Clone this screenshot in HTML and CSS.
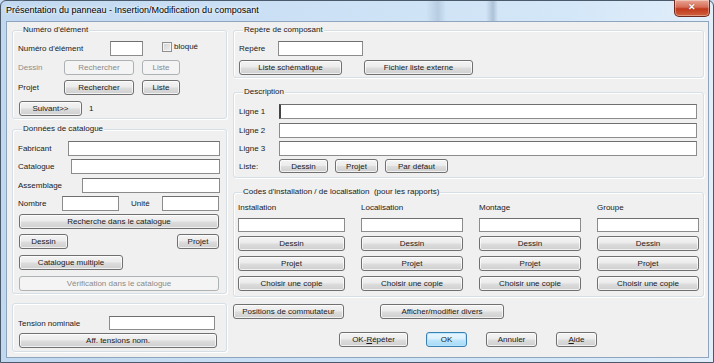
FILE: index.html
```html
<!DOCTYPE html>
<html lang="fr">
<head>
  <meta charset="UTF-8" />
  <title>Présentation du panneau</title>
  <link rel="stylesheet" href="styles.css">
</head>
<body>
  <div class="window">
    <div class="titlebar">
      <span class="title">Présentation du panneau - Insertion/Modification du composant</span>
      <div class="close">✕</div>
    </div>

    <div class="client">
      <div class="col-left">
        <div class="group g-num">
          <div class="group-title">Numéro d'élément</div>
          <div class="row">
            <span class="lbl w92">Numéro d'élément</span>
            <input class="field w33" type="text">
            <span class="check">
              <span class="check-box"></span>
              <span>bloqué</span>
            </span>
          </div>
          <div class="row mt4">
            <span class="lbl w46 grey">Dessin</span>
            <button class="btn w70" disabled>Rechercher</button>
            <button class="btn w38 ml8" disabled>Liste</button>
          </div>
          <div class="row mt5">
            <span class="lbl w46">Projet</span>
            <button class="btn w70">Rechercher</button>
            <button class="btn w38 ml8">Liste</button>
          </div>
          <div class="row mt6">
            <button class="btn w63 ml1">Suivant&gt;&gt;</button>
            <span class="ml7">1</span>
          </div>
        </div>

        <div class="group g-cat">
          <div class="group-title">Données de catalogue</div>
          <div class="row">
            <span class="lbl w50">Fabricant</span>
            <input class="field w152" type="text">
          </div>
          <div class="row mt3">
            <span class="lbl w53">Catalogue</span>
            <input class="field w149" type="text">
          </div>
          <div class="row mt4">
            <span class="lbl w64">Assemblage</span>
            <input class="field w138" type="text">
          </div>
          <div class="row mt3">
            <span class="lbl w44">Nombre</span>
            <input class="field w57" type="text">
            <span class="lbl w31 ml12">Unité</span>
            <input class="field w57" type="text">
          </div>
          <div class="row mt3">
            <button class="btn w200 ml1">Recherche dans le catalogue</button>
          </div>
          <div class="row mt5">
            <button class="btn w49 ml1">Dessin</button>
            <button class="btn w42 ml109">Projet</button>
          </div>
          <div class="row mt6">
            <button class="btn w104 ml1">Catalogue multiple</button>
          </div>
          <div class="row mt6">
            <button class="btn w200 ml1" disabled>Vérification dans le catalogue</button>
          </div>
        </div>

        <div class="group g-tension">
          <div class="row">
            <span class="lbl w91">Tension nominale</span>
            <input class="field w106 h14" type="text">
          </div>
          <div class="row mt3">
            <button class="btn w198 ml1">Aff. tensions nom.</button>
          </div>
        </div>
      </div>

      <div class="col-right">
        <div class="group g-repere">
          <div class="group-title">Repère de composant</div>
          <div class="row">
            <span class="lbl w39">Repère</span>
            <input class="field w85" type="text">
          </div>
          <div class="row mt4">
            <button class="btn w103">Liste schématique</button>
            <button class="btn w109 ml22">Fichier liste externe</button>
          </div>
        </div>

        <div class="group g-desc">
          <div class="group-title">Description</div>
          <div class="row">
            <span class="lbl w40">Ligne 1</span>
            <input class="field w418 focus" type="text">
          </div>
          <div class="row mt4">
            <span class="lbl w40">Ligne 2</span>
            <input class="field w418" type="text">
          </div>
          <div class="row mt3">
            <span class="lbl w40">Ligne 3</span>
            <input class="field w418" type="text">
          </div>
          <div class="row row-short mt3">
            <span class="lbl w40">Liste:</span>
            <button class="btn w49">Dessin</button>
            <button class="btn w43 ml7">Projet</button>
            <button class="btn w63 ml7">Par défaut</button>
          </div>
        </div>

        <div class="group g-codes">
          <div class="group-title">Codes d'installation / de localisation &nbsp;(pour les rapports)</div>
          <div class="codes">
            <div class="code-col">
              <span class="code-lbl">Installation</span>
              <input class="field h14" type="text">
              <button class="btn mt4">Dessin</button>
              <button class="btn mt5">Projet</button>
              <button class="btn mt5">Choisir une copie</button>
            </div>
            <div class="code-col">
              <span class="code-lbl">Localisation</span>
              <input class="field h14" type="text">
              <button class="btn mt4">Dessin</button>
              <button class="btn mt5">Projet</button>
              <button class="btn mt5">Choisir une copie</button>
            </div>
            <div class="code-col">
              <span class="code-lbl">Montage</span>
              <input class="field h14" type="text">
              <button class="btn mt4">Dessin</button>
              <button class="btn mt5">Projet</button>
              <button class="btn mt5">Choisir une copie</button>
            </div>
            <div class="code-col">
              <span class="code-lbl">Groupe</span>
              <input class="field h14" type="text">
              <button class="btn mt4">Dessin</button>
              <button class="btn mt5">Projet</button>
              <button class="btn mt5">Choisir une copie</button>
            </div>
          </div>
        </div>

        <div class="row actions-top">
          <button class="btn w111">Positions de commutateur</button>
          <button class="btn w124 ml36">Afficher/modifier divers</button>
        </div>
        <div class="row actions">
          <button class="btn w69 ml106">OK-<u>R</u>épéter</button>
          <button class="btn btn-default w41 ml18">OK</button>
          <button class="btn w51 ml19">Annuler</button>
          <button class="btn w41 ml19"><u>A</u>ide</button>
        </div>
      </div>
    </div>
  </div>
</body>
</html>
```

FILE: styles.css
```css
* {
  box-sizing: border-box;
}
body {
  margin: 0;
  font-family: 'Liberation Sans', Arial, sans-serif;
  font-size: 8px;
  color: #1a1a1a;
  background: #c8ddf3;
}
.window {
  width: 714px;
  height: 363px;
  border: 1px solid #4b5a6a;
  border-radius: 6px 6px 0 0;
  background: linear-gradient(to right, #c0d8f0, #cbe0f5 40%, #d4e7f8 80%, #e2eefa);
  position: relative;
  padding: 0 4px 0 5px;
}
.titlebar {
  height: 20px;
  line-height: 19px;
  font-size: 9px;
  color: #000;
  background: linear-gradient(to right, transparent 420px, rgba(90,110,140,0.2) 432px, transparent 440px, transparent 480px, rgba(90,110,140,0.3) 487px, transparent 492px);
}
.title {
  text-shadow: 0 0 6px #fff, 0 0 3px #fff;
}
.close {
  position: absolute;
  top: -1px;
  right: 3px;
  width: 36px;
  height: 17px;
  border: 1px solid #6e2a1e;
  border-top: none;
  border-radius: 0 0 5px 5px;
  background: linear-gradient(#e9a596, #d56c55 45%, #c0391d 55%, #d0603c);
  color: #fff;
  font-size: 9px;
  font-weight: bold;
  text-align: center;
  line-height: 15px;
  text-shadow: 0 0 1px #6e2a1e;
  box-shadow: inset 0 0 0 1px rgba(255,255,255,0.35);
}
.client {
  width: 703px;
  height: 337px;
  background: #f0f0f0;
  border: 1px solid #8fa5bd;
  display: flex;
  padding: 8px 4px 0 5px;
}
.col-left {
  width: 215px;
}
.col-right {
  width: 471px;
  margin-left: 6px;
}

/* group box: title sits on the top border */
.group {
  --pt: 10px;
  border: 1px solid #d5dfe5;
  border-radius: 3px;
  padding-left: 5px;
  box-shadow: inset 1px 1px 0 #fff, 1px 1px 0 #fff;
}
.group-title {
  width: fit-content;
  height: 10px;
  line-height: 10px;
  margin: -6px 0 calc(var(--pt) - 4px) 4px;
  padding: 0 1px;
  background: #f0f0f0;
}
.g-num { padding-bottom: 2px; }
.g-cat { --pt: 11px; margin-top: 10px; padding-bottom: 2px; }
.g-tension { margin-top: 9px; padding-top: 12px; padding-bottom: 3px; }
.g-repere { padding-bottom: 2px; }
.g-desc { --pt: 11px; margin-top: 14px; padding-bottom: 4px; }
.g-codes { --pt: 4px; margin-top: 14px; padding-left: 4px; padding-bottom: 5px; }

.row {
  display: flex;
  align-items: center;
}
.lbl {
  flex: none;
  white-space: nowrap;
}
.grey {
  color: #8d8d8d;
}
.field {
  display: block;
  height: 15px;
  border: 1px solid #8c8c8c;
  border-top-color: #6f6f6f;
  background: #fff;
  padding: 0;
  margin: 0;
  font: inherit;
}
.focus {
  border-left: 2px solid #444;
}
.h14 {
  height: 14px;
}
.btn {
  display: block;
  height: 15px;
  padding: 0;
  margin-top: 0;
  margin-bottom: 0;
  border: 1px solid #707070;
  border-radius: 3px;
  background: linear-gradient(#f4f4f4, #ebebeb 48%, #dddddd 52%, #cfcfcf);
  box-shadow: inset 0 0 0 1px rgba(255,255,255,0.7);
  font: inherit;
  color: #1a1a1a;
  white-space: nowrap;
}
.btn:disabled {
  border-color: #adb2b5;
  background: #f4f4f4;
  box-shadow: none;
  color: #8a8a8a;
}
.btn-default {
  border-color: #3c7fb1;
  background: linear-gradient(#eaf6fd, #d9f0fc 48%, #bee6fd 52%, #a7d9f5);
  box-shadow: inset 0 0 0 1px rgba(180,230,255,0.9);
}
.row-short .btn {
  height: 14px;
}
.check {
  display: flex;
  align-self: flex-start;
  align-items: flex-start;
  margin-left: 19px;
  margin-top: 1px;
  line-height: 9px;
}
.check-box {
  width: 10px;
  height: 10px;
  margin-right: 2px;
  border: 1px solid #8f8f8f;
  background: linear-gradient(135deg, #d2d2d2, #f0f0f0);
  box-shadow: inset 0 0 0 1px #f4f4f4;
}

.codes {
  display: grid;
  grid-template-columns: 107px 102px 102px 102px;
  column-gap: 16px;
}
.code-col {
  display: flex;
  flex-direction: column;
}
.code-lbl {
  height: 11px;
  line-height: 11px;
  margin-top: 5px;
  margin-bottom: 5px;
}
.code-col .btn {
  width: 100%;
}

.actions-top { margin-top: 7px; }
.actions { margin-top: 13px; }

.mt3 { margin-top: 3px; }
.mt4 { margin-top: 4px; }
.mt5 { margin-top: 5px; }
.mt6 { margin-top: 6px; }
.ml1 { margin-left: 1px; }
.ml7 { margin-left: 7px; }
.ml8 { margin-left: 8px; }
.ml12 { margin-left: 12px; }
.ml18 { margin-left: 18px; }
.ml19 { margin-left: 19px; }
.ml22 { margin-left: 22px; }
.ml36 { margin-left: 36px; }
.ml106 { margin-left: 106px; }
.ml109 { margin-left: 109px; }

.w31 { width: 31px; }
.w33 { width: 33px; }
.w38 { width: 38px; }
.w39 { width: 39px; }
.w40 { width: 40px; }
.w41 { width: 41px; }
.w42 { width: 42px; }
.w43 { width: 43px; }
.w44 { width: 44px; }
.w46 { width: 46px; }
.w49 { width: 49px; }
.w50 { width: 50px; }
.w51 { width: 51px; }
.w53 { width: 53px; }
.w57 { width: 57px; }
.w63 { width: 63px; }
.w64 { width: 64px; }
.w69 { width: 69px; }
.w70 { width: 70px; }
.w85 { width: 85px; }
.w91 { width: 91px; }
.w92 { width: 92px; }
.w103 { width: 103px; }
.w104 { width: 104px; }
.w106 { width: 106px; }
.w109 { width: 109px; }
.w111 { width: 111px; }
.w124 { width: 124px; }
.w138 { width: 138px; }
.w149 { width: 149px; }
.w152 { width: 152px; }
.w198 { width: 198px; }
.w200 { width: 200px; }
.w418 { width: 418px; }
```
